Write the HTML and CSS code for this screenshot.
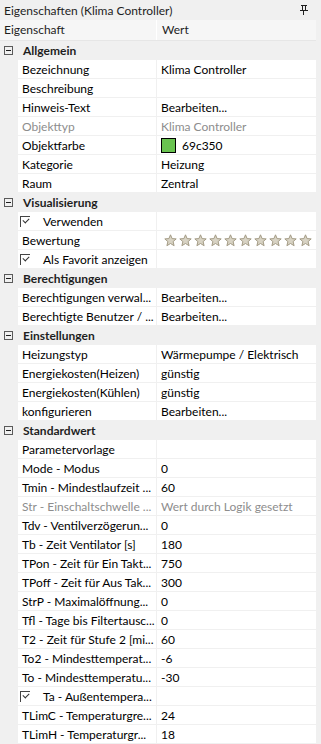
FILE: index.html
```html
<!DOCTYPE html>
<html lang="de">

<head>
  <meta charset="UTF-8">
  <meta name="viewport" content="width=device-width, initial-scale=1.0">
  <title>Eigenschaften</title>
  <link rel="stylesheet" href="styles.css">
</head>

<body>
  <div class="panel">
    <div class="titlebar">
      <span>Eigenschaften (Klima Controller)</span>
      <svg class="pin" width="8" height="10" viewBox="0 0 8 10">
        <rect x="1" y="0" width="6" height="1" fill="#1e1e1e" />
        <rect x="2" y="1" width="1" height="5" fill="#1e1e1e" />
        <rect x="5" y="1" width="1" height="5" fill="#1e1e1e" />
        <rect x="0" y="5" width="8" height="1" fill="#1e1e1e" />
        <rect x="3" y="6" width="1" height="4" fill="#1e1e1e" />
      </svg>
    </div>

    <div class="header">
      <div class="h-name">Eigenschaft</div>
      <div class="h-value">Wert</div>
    </div>

    <!-- Allgemein -->
    <div class="cat"><span class="minus"></span>Allgemein</div>
    <div class="row"><div class="name">Bezeichnung</div><div class="value">Klima Controller</div></div>
    <div class="row"><div class="name">Beschreibung</div><div class="value"></div></div>
    <div class="row"><div class="name">Hinweis-Text</div><div class="value">Bearbeiten...</div></div>
    <div class="row off"><div class="name">Objekttyp</div><div class="value">Klima Controller</div></div>
    <div class="row"><div class="name">Objektfarbe</div><div class="value"><span class="swatch"></span>69c350</div></div>
    <div class="row"><div class="name">Kategorie</div><div class="value">Heizung</div></div>
    <div class="row"><div class="name">Raum</div><div class="value">Zentral</div></div>

    <!-- Visualisierung -->
    <div class="cat"><span class="minus"></span>Visualisierung</div>
    <div class="row"><div class="name"><span class="check"></span>Verwenden</div><div class="value"></div></div>
    <div class="row">
      <div class="name">Bewertung</div>
      <div class="value stars" id="stars"></div>
    </div>
    <div class="row"><div class="name"><span class="check"></span>Als Favorit anzeigen</div><div class="value"></div></div>

    <!-- Berechtigungen -->
    <div class="cat"><span class="minus"></span>Berechtigungen</div>
    <div class="row"><div class="name">Berechtigungen verwal...</div><div class="value">Bearbeiten...</div></div>
    <div class="row"><div class="name">Berechtigte Benutzer / ...</div><div class="value">Bearbeiten...</div></div>

    <!-- Einstellungen -->
    <div class="cat"><span class="minus"></span>Einstellungen</div>
    <div class="row"><div class="name">Heizungstyp</div><div class="value">Wärmepumpe / Elektrisch</div></div>
    <div class="row"><div class="name">Energiekosten(Heizen)</div><div class="value">günstig</div></div>
    <div class="row"><div class="name">Energiekosten(Kühlen)</div><div class="value">günstig</div></div>
    <div class="row"><div class="name">konfigurieren</div><div class="value">Bearbeiten...</div></div>

    <!-- Standardwert -->
    <div class="cat"><span class="minus"></span>Standardwert</div>
    <div class="row"><div class="name">Parametervorlage</div><div class="value"></div></div>
    <div class="row"><div class="name">Mode - Modus</div><div class="value">0</div></div>
    <div class="row"><div class="name">Tmin - Mindestlaufzeit ...</div><div class="value">60</div></div>
    <div class="row off"><div class="name">Str - Einschaltschwelle ...</div><div class="value">Wert durch Logik gesetzt</div></div>
    <div class="row"><div class="name">Tdv - Ventilverzögerun...</div><div class="value">0</div></div>
    <div class="row"><div class="name">Tb - Zeit Ventilator [s]</div><div class="value">180</div></div>
    <div class="row"><div class="name">TPon - Zeit für Ein Takt...</div><div class="value">750</div></div>
    <div class="row"><div class="name">TPoff - Zeit für Aus Tak...</div><div class="value">300</div></div>
    <div class="row"><div class="name">StrP - Maximalöffnung...</div><div class="value">0</div></div>
    <div class="row"><div class="name">Tfl - Tage bis Filtertausc...</div><div class="value">0</div></div>
    <div class="row"><div class="name">T2 - Zeit für Stufe 2 [mi...</div><div class="value">60</div></div>
    <div class="row"><div class="name">To2 - Mindesttemperat...</div><div class="value">-6</div></div>
    <div class="row"><div class="name">To - Mindesttemperatu...</div><div class="value">-30</div></div>
    <div class="row"><div class="name"><span class="check"></span>Ta - Außentempera...</div><div class="value"></div></div>
    <div class="row"><div class="name">TLimC - Temperaturgre...</div><div class="value">24</div></div>
    <div class="row"><div class="name">TLimH - Temperaturgr...</div><div class="value">18</div></div>
  </div>

  <script>
    document.addEventListener("DOMContentLoaded", function () {
      var STAR_COUNT = 10;
      var starSvg = '<svg width="13" height="13" viewBox="0 0 13 13">' +
        '<polygon points="6.5,0.8 8.1,4.6 12.2,4.9 9.1,7.6 10.1,11.7 6.5,9.5 2.9,11.7 3.9,7.6 0.8,4.9 4.9,4.6" ' +
        'fill="#d8d3c4" stroke="#a39b85" stroke-width="1" /></svg>';

      // Sterne fuer die Bewertung erzeugen
      var html = '';
      for (var i = 0; i < STAR_COUNT; i++) {
        html += starSvg;
      }
      document.getElementById('stars').innerHTML = html;
    })
  </script>
</body>

</html>
```
FILE: styles.css
```css
* {
  box-sizing: border-box;
}

html,
body {
  width: 100%;
  height: 100%;
  margin: 0;
}

body {
  font-family: Lato, "Noto Sans", sans-serif;
  font-size: 12px;
  color: #000;
  background-color: #f0f0f0;
}

.panel {
  width: 100%;
  overflow: hidden;
}

.titlebar {
  display: flex;
  align-items: center;
  justify-content: space-between;
  height: 20px;
  padding: 0 13px 0 4px;
  color: #1e1e1e;
}

.pin {
  display: block;
}

.header {
  display: flex;
  height: 21px;
  margin-right: 5px;
  background-color: #f6f6f6;
  border-bottom: 1px solid #e6e6e6;
  color: #1e1e1e;
}

.h-name {
  width: 157px;
  padding-left: 4px;
  line-height: 20px;
  border-right: 1px solid #fff;
}

.h-value {
  flex: 1;
  padding-left: 5px;
  line-height: 20px;
}

.cat {
  display: flex;
  align-items: center;
  height: 19px;
  padding-left: 4px;
  font-weight: bold;
  color: #1e1e1e;
}

.minus {
  position: relative;
  width: 9px;
  height: 9px;
  margin-right: 10px;
  border: 1px solid #5a5a5a;
}

.minus::after {
  content: "";
  position: absolute;
  left: 1px;
  top: 3px;
  width: 5px;
  height: 1px;
  background-color: #1e1e1e;
}

.row {
  display: flex;
  height: 19px;
  margin-left: 18px;
  margin-right: 5px;
  border-bottom: 1px solid #f0f0f0;
  background-color: #fff;
}

.name {
  display: flex;
  align-items: center;
  width: 139px;
  padding-left: 4px;
  white-space: nowrap;
  overflow: hidden;
  border-right: 1px solid #f0f0f0;
}

.value {
  display: flex;
  align-items: center;
  flex: 1;
  padding-left: 4px;
  white-space: nowrap;
  overflow: hidden;
}

.off .name,
.off .value {
  color: #8d8d8d;
}

.swatch {
  width: 15px;
  height: 15px;
  margin-right: 6px;
  background-color: #69c350;
  border: 1px solid #000;
}

.check {
  position: relative;
  width: 10px;
  height: 11px;
  margin: 0 13px 0 -2px;
  border-left: 1px solid #444;
  border-top: 1px solid #444;
}

.check::after {
  content: "";
  position: absolute;
  left: 2px;
  top: 1px;
  width: 5px;
  height: 3px;
  border-left: 1px solid #333;
  border-bottom: 1px solid #333;
  transform: rotate(-45deg);
}

.stars {
  gap: 2px;
  padding-left: 7px;
}

.stars svg {
  display: block;
}
```
